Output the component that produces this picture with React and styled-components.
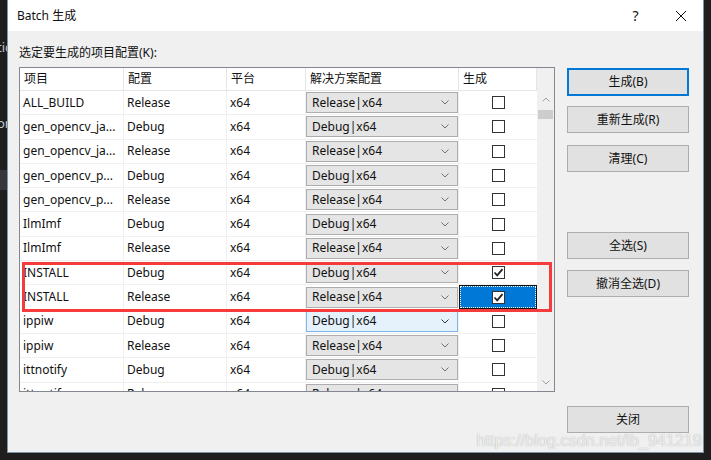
import styled, { createGlobalStyle } from "styled-components"

// data
const rows = [
    { name: "ALL_BUILD", config: "Release" },
    { name: "gen_opencv_ja...", config: "Debug" },
    { name: "gen_opencv_ja...", config: "Release" },
    { name: "gen_opencv_p...", config: "Debug" },
    { name: "gen_opencv_p...", config: "Release" },
    { name: "IlmImf", config: "Debug" },
    { name: "IlmImf", config: "Release" },
    { name: "INSTALL", config: "Debug", checked: true },
    { name: "INSTALL", config: "Release", checked: true, selected: true },
    { name: "ippiw", config: "Debug", hover: true },
    { name: "ippiw", config: "Release" },
    { name: "ittnotify", config: "Debug" },
    { name: "ittnotify", config: "Release" },
]

const COLS = "104px 103px 79px 153px 78px"
const UI_FONT = `"Noto Sans", "Noto Sans CJK SC", sans-serif`

const GlobalStyle = createGlobalStyle`
    html, body {
        margin: 0;
        padding: 0;
        background: #1e1e1e;
        font-family: ${UI_FONT};
        font-size: 12px;
        color: #111;
    }
    * { box-sizing: border-box; }
`

const Screen = styled.div`
    position: relative;
    width: 711px;
    height: 460px;
    overflow: hidden;
    padding-left: 7px;
    background: #1e1e1e;
`

const Fragment = styled.span`
    position: absolute;
    left: -3px;
    top: ${({ $top }) => $top}px;
    color: #c8c8c8;
    font-size: 13px;
    line-height: 14px;
`

const Panel = styled.div`
    position: absolute;
    left: 0;
    top: ${({ $top }) => $top}px;
    width: 7px;
    height: ${({ $h }) => $h}px;
    background: #37373b;
`

const Dialog = styled.div`
    position: relative;
    width: 697px;
    height: 453px;
    border: 1px solid #7d93a6;
    border-top: none;
    background: #f0f0f0;
    display: flex;
    flex-direction: column;
`

const TitleBar = styled.div`
    height: 31px;
    background: #fff;
    display: flex;
    align-items: center;
    padding-left: 9px;
`

const Title = styled.div`
    flex: 1;
    font-size: 12px;
    line-height: 16px;
`

const CaptionButton = styled.div`
    width: 45px;
    height: 31px;
    display: flex;
    align-items: center;
    justify-content: center;
    font-size: 14px;
`

const Body = styled.div`
    display: flex;
    padding: 14px 0 0 11px;
`

const LeftCol = styled.div`
    display: flex;
    flex-direction: column;
`

const Label = styled.div`
    line-height: 16px;
    height: 16px;
    margin-bottom: 6px;
`

const GridBox = styled.div`
    width: 536px;
    height: 325px;
    border: 1px solid #828790;
    background: #fff;
    display: flex;
    overflow: hidden;
`

const Table = styled.div`
    width: 517px;
    overflow: hidden;
`

const HeaderRow = styled.div`
    display: grid;
    grid-template-columns: ${COLS};
    height: 23px;
    border-bottom: 1px solid #e5e5e5;
`

const HeaderCell = styled.div`
    padding-left: 4px;
    display: flex;
    align-items: center;
    border-right: 1px solid #e5e5e5;
    line-height: 16px;
`

const Row = styled.div`
    display: grid;
    grid-template-columns: ${COLS};
    height: 24.3px;
    border-bottom: 1px solid #f0f0f0;
`

const Cell = styled.div`
    padding-left: 3px;
    display: flex;
    align-items: center;
    border-right: 1px solid #f0f0f0;
    white-space: nowrap;
    overflow: hidden;
    line-height: 16px;
`

const ComboCell = styled.div`
    border-right: 1px solid #f0f0f0;
    display: flex;
    align-items: center;
`

const Combo = styled.div`
    width: 152px;
    height: 21px;
    margin-right: -1px;
    border: 1px solid ${({ $hover }) => ($hover ? "#7eb4ea" : "#adadad")};
    background: ${({ $hover }) => ($hover ? "#e5f1fb" : "#e5e5e5")};
    display: flex;
    align-items: center;
    justify-content: space-between;
    padding: 0 8px 0 5px;
    line-height: 16px;
`

const CheckCell = styled.div`
    display: flex;
    align-items: center;
    justify-content: center;
    background: ${({ $selected }) => ($selected ? "#0078d7" : "transparent")};
    border: 1px solid ${({ $selected }) => ($selected ? "#111" : "transparent")};
    outline: ${({ $selected }) => ($selected ? "1px dotted #fff" : "none")};
    outline-offset: -2px;
    margin-right: ${({ $selected }) => ($selected ? "0" : "0")};
`

const Box = styled.div`
    width: 13px;
    height: 13px;
    border: 1px solid #333;
    background: #fff;
    display: flex;
    align-items: center;
    justify-content: center;
`

const ScrollBar = styled.div`
    width: 17px;
    background: #f0f0f0;
    display: flex;
    flex-direction: column;
`

const ScrollCorner = styled.div`
    height: 23px;
`

const ScrollArrow = styled.div`
    height: 17px;
    display: flex;
    align-items: center;
    justify-content: center;
`

const Track = styled.div`
    flex: 1;
    padding: 2px 1px 0;
`

const Thumb = styled.div`
    height: 9px;
    background: #cdcdcd;
`

const ButtonCol = styled.div`
    display: flex;
    flex-direction: column;
    margin-left: 12px;
    padding-top: 23px;
`

const Button = styled.div`
    width: 122px;
    height: ${({ $primary }) => ($primary ? 28 : 27)}px;
    margin-top: ${({ $gap }) => $gap || 0}px;
    background: #e1e1e1;
    border: ${({ $primary }) => ($primary ? "2px solid #0078d7" : "1px solid #adadad")};
    display: flex;
    align-items: center;
    justify-content: center;
    line-height: 16px;
`

const Highlight = styled.div`
    position: absolute;
    left: 14px;
    top: 262px;
    width: 530px;
    height: 50px;
    border: 3px solid #f53b3b;
    pointer-events: none;
`

const Watermark = styled.div`
    position: absolute;
    right: 9px;
    bottom: 10px;
    font-family: "Liberation Sans", Arial, sans-serif;
    font-size: 16px;
    line-height: 18px;
    color: rgba(255, 255, 255, 0.8);
    text-shadow: 0 0 1px rgba(120, 120, 120, 0.7);
    letter-spacing: 0.1px;
`

const Chevron = ({ up, color = "#606060" }) => (
    <svg width="8" height="5" viewBox="0 0 8 5">
        <path
            d={up ? "M0.5 4.5 L4 1 L7.5 4.5" : "M0.5 0.5 L4 4 L7.5 0.5"}
            fill="none"
            stroke={color}
            strokeWidth="1"
        />
    </svg>
)

const Check = () => (
    <svg width="11" height="11" viewBox="0 0 11 11">
        <path d="M1.5 5.5 L4.2 8.3 L9.5 2.2" fill="none" stroke="#222" strokeWidth="1.8" />
    </svg>
)

const Close = () => (
    <svg width="12" height="12" viewBox="0 0 12 12">
        <path d="M1 1 L11 11 M11 1 L1 11" stroke="#111" strokeWidth="1" />
    </svg>
)

const App = () => {
    return (
        <Screen>
            <GlobalStyle />
            <Fragment $top={40}>tic</Fragment>
            <Fragment $top={116}>or</Fragment>
            <Panel $top={170} $h={20} />
            <Dialog>
                <TitleBar>
                    <Title>Batch 生成</Title>
                    <CaptionButton>?</CaptionButton>
                    <CaptionButton>
                        <Close />
                    </CaptionButton>
                </TitleBar>
                <Body>
                    <LeftCol>
                        <Label>选定要生成的项目配置(K):</Label>
                        <GridBox>
                            <Table>
                                <HeaderRow>
                                    <HeaderCell>项目</HeaderCell>
                                    <HeaderCell>配置</HeaderCell>
                                    <HeaderCell>平台</HeaderCell>
                                    <HeaderCell>解决方案配置</HeaderCell>
                                    <HeaderCell>生成</HeaderCell>
                                </HeaderRow>
                                {rows.map((row, index) => (
                                    <Row key={index}>
                                        <Cell>{row.name}</Cell>
                                        <Cell>{row.config}</Cell>
                                        <Cell>x64</Cell>
                                        <ComboCell>
                                            <Combo $hover={row.hover}>
                                                <span>{row.config}|x64</span>
                                                <Chevron color={row.hover ? "#333" : "#707070"} />
                                            </Combo>
                                        </ComboCell>
                                        <CheckCell $selected={row.selected}>
                                            <Box>{row.checked && <Check />}</Box>
                                        </CheckCell>
                                    </Row>
                                ))}
                            </Table>
                            <ScrollBar>
                                <ScrollCorner />
                                <ScrollArrow>
                                    <Chevron up color="#a0a0a0" />
                                </ScrollArrow>
                                <Track>
                                    <Thumb />
                                </Track>
                                <ScrollArrow>
                                    <Chevron color="#a0a0a0" />
                                </ScrollArrow>
                            </ScrollBar>
                        </GridBox>
                    </LeftCol>
                    <ButtonCol>
                        <Button $primary>生成(B)</Button>
                        <Button $gap={10}>重新生成(R)</Button>
                        <Button $gap={12}>清理(C)</Button>
                        <Button $gap={60}>全选(S)</Button>
                        <Button $gap={11}>撤消全选(D)</Button>
                        <Button $gap={109}>关闭</Button>
                    </ButtonCol>
                </Body>
                <Highlight />
            </Dialog>
            <Watermark>https://blog.csdn.net/lb_941219</Watermark>
        </Screen>
    )
}

export default App
